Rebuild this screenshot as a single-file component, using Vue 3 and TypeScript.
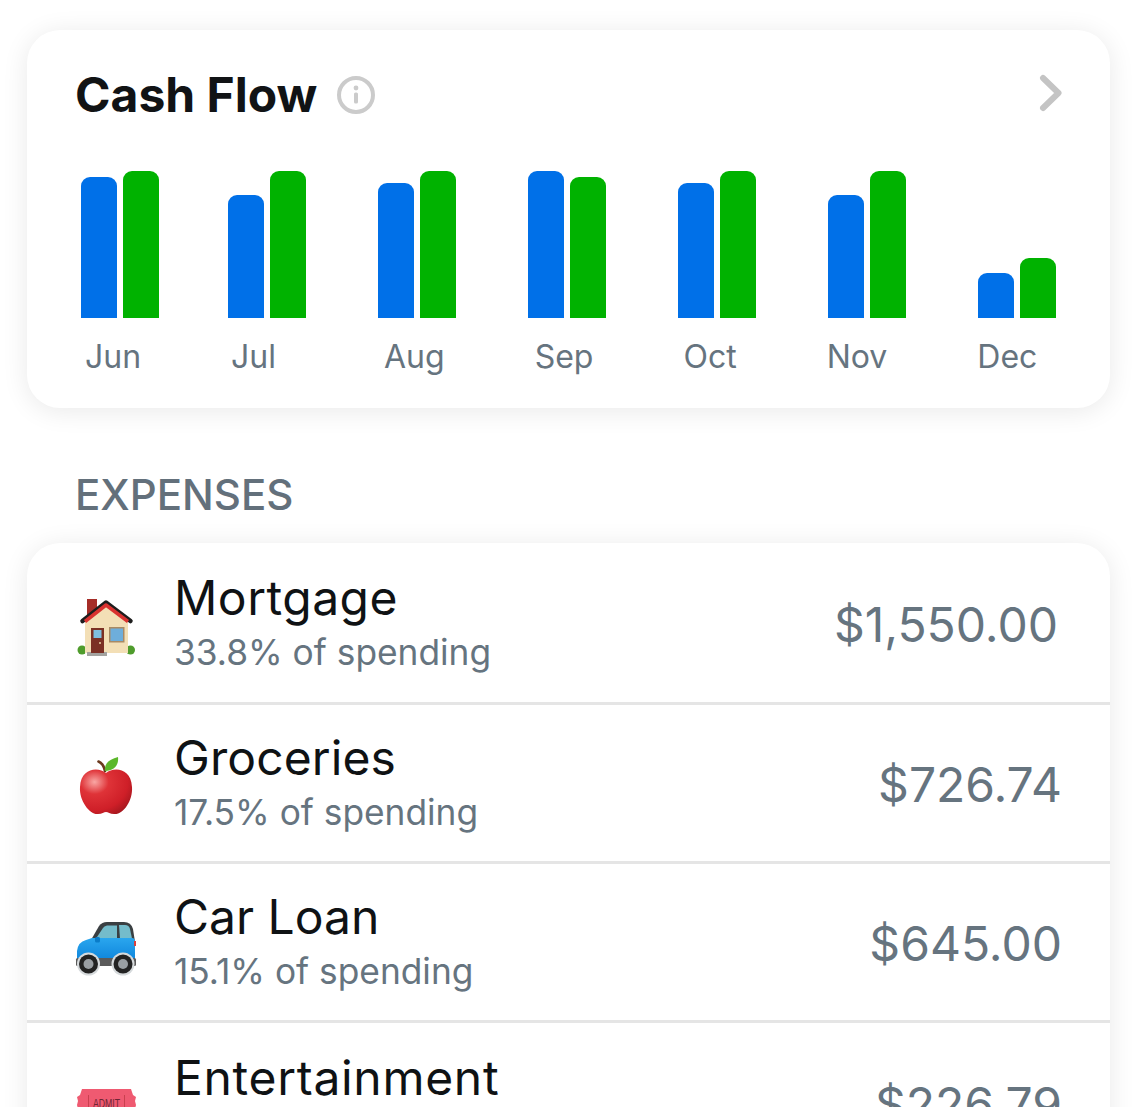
<template>
  <main class="screen">
    <section class="card flow">
      <header class="flow-head">
        <h2>Cash Flow</h2>
        <svg class="info" width="40" height="40" viewBox="0 0 40 40" aria-hidden="true">
          <circle cx="20" cy="20" r="17" fill="none" stroke="#cbcbcb" stroke-width="4" />
          <circle cx="20" cy="13" r="2.4" fill="#cbcbcb" />
          <rect x="18" y="17.5" width="4" height="11" rx="1.6" fill="#cbcbcb" />
        </svg>
        <svg class="chevron" width="24" height="38" viewBox="0 0 24 38" aria-hidden="true">
          <path d="M4 4 L19.500 19 L4 34" fill="none" stroke="#c4c4c4" stroke-width="6" stroke-linecap="round" stroke-linejoin="round" />
        </svg>
      </header>
      <div class="bars">
        <div v-for="m in months" :key="m.name" class="pair">
          <span class="bar blue" :style="{ height: m.income + 'px' }"></span>
          <span class="bar green" :style="{ height: m.spend + 'px' }"></span>
        </div>
      </div>
      <div class="labels">
        <span v-for="m in months" :key="m.name">{{ m.name }}</span>
      </div>
    </section>

    <h3 class="section-title">EXPENSES</h3>

    <section class="card list">
      <article v-for="row in rows" :key="row.name" class="row">
        <svg class="emoji" width="90" height="80" viewBox="0 0 90 80" aria-hidden="true">
          <template v-if="row.icon === 'house'">
            <rect x="27" y="14" width="10" height="18" fill="#a52d28" />
            <circle cx="22" cy="65" r="4.500" fill="#4f9c2c" />
            <circle cx="70.500" cy="65" r="4.500" fill="#4f9c2c" />
            <path d="M25 34 L46 18 L68 34 V68 H25 Z" fill="#f3dfb6" />
            <rect x="27" y="67" width="20" height="4" fill="#a3a3a0" />
            <rect x="31" y="43" width="13" height="25" fill="#7b3025" />
            <rect x="33.500" y="45" width="8" height="8" fill="#7fbfe0" />
            <circle cx="40" cy="58" r="1" fill="#e6d3a8" />
            <rect x="49" y="42" width="15.500" height="15.500" fill="#a98a64" />
            <rect x="50.500" y="43.500" width="12.500" height="12.500" fill="#6eaedb" />
            <path d="M22.500 36 L46 17.500 L70.500 36" fill="none" stroke="#1d1d1d" stroke-width="4.500" stroke-linejoin="round" stroke-linecap="round" />
            <path d="M25 36.500 L46 20 L68 36.500" fill="none" stroke="#d93230" stroke-width="3.500" stroke-linejoin="round" />
          </template>
          <template v-else-if="row.icon === 'apple'">
            <defs>
              <radialGradient id="appleFill" cx="0.28" cy="0.28" r="0.85">
                <stop offset="0" stop-color="#f9a7a4" />
                <stop offset="0.32" stop-color="#df3338" />
                <stop offset="0.75" stop-color="#cf1f28" />
                <stop offset="1" stop-color="#a3171e" />
              </radialGradient>
            </defs>
            <path d="M46 28 C39 22 21 22 20 42 C19 56 30 70 38 69 C42 69 44 67 46 67 C48 67 50 69 54 69 C63 70 73 56 72 42 C71 22 53 22 46 28 Z" fill="url(#appleFill)" />
            <path d="M38.500 16.500 C42 18 44 21 45 26" fill="none" stroke="#6b3a1e" stroke-width="2.600" stroke-linecap="round" />
            <path d="M45 26 C44 18 50 14 58 12 C59 20 54 26 45 26 Z" fill="#5cb72a" />
          </template>
          <template v-else-if="row.icon === 'car'">
            <defs>
              <linearGradient id="carFill" x1="0" y1="0" x2="0" y2="1">
                <stop offset="0" stop-color="#2aa6ee" />
                <stop offset="1" stop-color="#0f86dc" />
              </linearGradient>
            </defs>
            <path d="M31 36 L39 22 Q42 18 47 18 H64 Q71 18 73 25 L75 38 Z" fill="#3a3f42" />
            <path d="M36 34.500 L43 24 Q44 22 47 21.500 H57 V34.500 Z" fill="#74bccb" />
            <path d="M59 21 H65 Q69 21 70 25 L72 34.500 H60 Z" fill="#74bccb" />
            <path d="M17 55 V47 Q18 38 26 36 L32 34 H72 Q75 34 75 38 V56 Z" fill="url(#carFill)" />
            <rect x="35" y="33" width="5" height="5.500" rx="1.500" fill="#0a7cc9" />
            <rect x="74" y="37" width="2" height="5" fill="#d8413f" />
            <rect x="16" y="54" width="60" height="8" rx="1.500" fill="#5b5b5b" />
            <circle cx="28.500" cy="60" r="11.500" fill="#d6dadc" />
            <circle cx="63" cy="60" r="11.500" fill="#d6dadc" />
            <circle cx="28.500" cy="60" r="9.500" fill="#232323" />
            <circle cx="28.500" cy="60" r="5" fill="#9a9fa3" />
            <circle cx="63" cy="60" r="9.500" fill="#232323" />
            <circle cx="63" cy="60" r="5" fill="#9a9fa3" />
          </template>
          <template v-else>
            <path d="M22 24 H71 L73 30 L76 32 L75 36 L76 40 L75 44 L76 48 L75 52 L76 56 V80 H17 V56 L18 52 L17 48 L18 44 L17 40 L18 36 L17 32 L20 30 Z" fill="#ef5a71" />
            <rect x="28" y="30" width="1" height="50" fill="#c9404f" />
            <rect x="64" y="30" width="1" height="50" fill="#c9404f" />
            <text x="33" y="43" font-family="'Liberation Sans', sans-serif" font-size="12.500" fill="#6e2534" textLength="27" lengthAdjust="spacingAndGlyphs">ADMIT</text>
          </template>
        </svg>
        <div class="copy">
          <div class="name" :style="{ letterSpacing: row.tracking + 'px' }">{{ row.name }}</div>
          <div class="share">{{ row.share }} of spending</div>
        </div>
        <div class="amount">{{ row.amount }}</div>
      </article>
    </section>
  </main>
</template>

<script setup lang="ts">
type Month = { name: string; income: number; spend: number };
type Row = { name: string; share: string; amount: string; icon: string; tracking: number };

const months: Month[] = [
  { name: "Jun", income: 141, spend: 147 },
  { name: "Jul", income: 123, spend: 147 },
  { name: "Aug", income: 135, spend: 147 },
  { name: "Sep", income: 147, spend: 141 },
  { name: "Oct", income: 135, spend: 147 },
  { name: "Nov", income: 123, spend: 147 },
  { name: "Dec", income: 45, spend: 60 },
];

const rows: Row[] = [
  { name: "Mortgage", share: "33.8%", amount: "$1,550.00", icon: "house", tracking: 0.5 },
  { name: "Groceries", share: "17.5%", amount: "$726.74", icon: "apple", tracking: 0.1 },
  { name: "Car Loan", share: "15.1%", amount: "$645.00", icon: "car", tracking: 0 },
  { name: "Entertainment", share: "4.9%", amount: "$226.79", icon: "ticket", tracking: 0.7 },
];
</script>

<style>
html,
body {
  margin: 0;
  background: #fff;
  overflow: hidden;
}
</style>

<style scoped>
.screen {
  height: 1107px;
  overflow: hidden;
  padding: 30px 30px 0 27px;
  box-sizing: border-box;
  background: #fff;
  font-family: Inter, "Liberation Sans", sans-serif;
}
.card {
  background: #fff;
  border-radius: 33px;
  box-shadow: 0 3px 27px rgba(0, 0, 0, 0.09);
}
.flow {
  height: 378px;
  box-sizing: border-box;
  padding: 40px 0 0 48px;
}
.flow-head {
  display: flex;
  align-items: center;
  height: 50px;
}
.flow-head h2 {
  margin: 0;
  font-size: 48px;
  line-height: 50px;
  font-weight: 700;
  color: #111315;
}
.info {
  margin-left: 19px;
}
.chevron {
  margin-left: auto;
  margin-right: 47px;
  margin-top: -4px;
}
.bars {
  display: flex;
  align-items: flex-end;
  gap: 72px;
  height: 147px;
  margin: 51px 0 0 6px;
}
.pair {
  display: flex;
  align-items: flex-end;
  gap: 6px;
}
.pair:first-child {
  margin-right: -3px;
}
.bar {
  display: block;
  width: 36px;
  border-radius: 9px 9px 0 0;
}
.blue {
  background: #0070e8;
}
.green {
  background: #00b200;
}
.labels {
  display: flex;
  gap: 90px;
  margin: 19px 0 0 10px;
  font-size: 32px;
  line-height: 40px;
  color: #66747f;
}
.labels span:nth-child(2) {
  margin-right: 18px;
}
.section-title {
  margin: 62px 0 23px 48px;
  font-size: 42px;
  line-height: 50px;
  font-weight: 500;
  color: #63707b;
}
.row {
  display: flex;
  align-items: center;
  height: 159px;
  box-sizing: border-box;
  padding: 0 48px 0 33px;
  border-bottom: 3px solid #e5e5e5;
}
.row:first-child {
  height: 162px;
}
.row:first-child .amount {
  margin-right: 4px;
}
.row:last-child {
  border-bottom: 0;
}
.emoji {
  flex: none;
  margin-top: 4px;
}
.copy {
  margin-left: 24px;
}
.name {
  font-size: 48px;
  line-height: 56px;
  color: #0f1214;
  margin-top: -1px;
}
.share {
  font-size: 35.300px;
  line-height: 44px;
  margin-top: 5px;
  color: #66747f;
}
.amount {
  margin-left: auto;
  margin-top: 4px;
  font-size: 48px;
  line-height: 56px;
  color: #66747f;
}
</style>
